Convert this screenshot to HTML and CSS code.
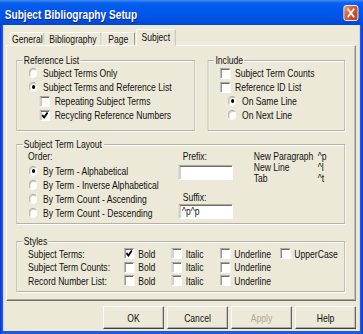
FILE: index.html
```html
<!DOCTYPE html>
<html lang="en">
<head>
    <meta charset="UTF-8">
    <title>Subject Bibliography Setup</title>
    <link rel="stylesheet" href="styles.css">
</head>
<body>

    <div class="screen">
    <div class="window">
        <div class="titlebar">
            <span class="title">Subject Bibliography Setup</span>
            <span class="close">
                <svg width="11" height="10" viewBox="0 0 11 10"><path d="M2 1.5 L9 8.5 M9 1.5 L2 8.5" stroke="#fff" stroke-width="2" stroke-linecap="square"/></svg>
            </span>
        </div>

        <div class="client">
            <div class="tabs">
                <div class="tab t-general">General</div>
                <div class="tab t-biblio">Bibliography</div>
                <div class="tab t-page">Page</div>
                <div class="tab active t-subject">Subject</div>
            </div>

            <div class="panel">
                <div class="top-row">
                    <fieldset class="group g-reflist">
                        <legend>Reference List</legend>
                        <div class="body">
                            <div class="opt"><span class="radio"></span>Subject Terms Only</div>
                            <div class="opt"><span class="radio on"></span>Subject Terms and Reference List</div>
                            <div class="opt sub"><span class="check"></span>Repeating Subject Terms</div>
                            <div class="opt sub"><span class="check"><svg width="9" height="9" viewBox="0 0 9 9"><path d="M1 4 L3.5 6.5 L8 1.5" stroke="#000" stroke-width="2" fill="none"/></svg></span>Recycling Reference Numbers</div>
                        </div>
                    </fieldset>
                    <fieldset class="group g-include">
                        <legend>Include</legend>
                        <div class="body">
                            <div class="opt"><span class="check"></span>Subject Term Counts</div>
                            <div class="opt"><span class="check"></span>Reference ID List</div>
                            <div class="opt sub"><span class="radio on"></span>On Same Line</div>
                            <div class="opt sub"><span class="radio"></span>On Next Line</div>
                        </div>
                    </fieldset>
                </div>

                <fieldset class="group g-layout">
                    <legend>Subject Term Layout</legend>
                    <div class="body layout">
                        <div class="order">
                            <div class="order-label">Order:</div>
                            <div class="opt"><span class="radio on"></span>By Term - Alphabetical</div>
                            <div class="opt"><span class="radio"></span>By Term - Inverse Alphabetical</div>
                            <div class="opt"><span class="radio"></span>By Term Count - Ascending</div>
                            <div class="opt"><span class="radio"></span>By Term Count - Descending</div>
                        </div>
                        <div class="fixes">
                            <div class="fix-label">Prefix:</div>
                            <div class="textbox"></div>
                            <div class="fix-label suffix">Suffix:</div>
                            <div class="textbox">^p^p</div>
                        </div>
                        <div class="codes">
                            <span>New Paragraph</span><span>^p</span>
                            <span>New Line</span><span>^l</span>
                            <span>Tab</span><span>^t</span>
                        </div>
                    </div>
                </fieldset>

                <fieldset class="group g-styles">
                    <legend>Styles</legend>
                    <div class="body styles">
                        <span>Subject Terms:</span>
                        <div class="opt"><span class="check"><svg width="9" height="9" viewBox="0 0 9 9"><path d="M1 4 L3.5 6.5 L8 1.5" stroke="#000" stroke-width="2" fill="none"/></svg></span>Bold</div>
                        <div class="opt"><span class="check"></span>Italic</div>
                        <div class="opt"><span class="check"></span>Underline</div>
                        <div class="opt"><span class="check"></span>UpperCase</div>

                        <span>Subject Term Counts:</span>
                        <div class="opt"><span class="check"></span>Bold</div>
                        <div class="opt"><span class="check"></span>Italic</div>
                        <div class="opt"><span class="check"></span>Underline</div>
                        <span></span>

                        <span>Record Number List:</span>
                        <div class="opt"><span class="check"></span>Bold</div>
                        <div class="opt"><span class="check"></span>Italic</div>
                        <div class="opt"><span class="check"></span>Underline</div>
                        <span></span>
                    </div>
                </fieldset>
            </div>

            <div class="buttons">
                <button>OK</button>
                <button>Cancel</button>
                <button class="disabled">Apply</button>
                <button>Help</button>
            </div>
        </div>
    </div>
    </div>

</body>
</html>
```

FILE: styles.css
```css
html, body {
    margin: 0;
    padding: 0;
    overflow: hidden;
}
body {
    font-family: "Liberation Sans", Arial, sans-serif;
    font-size: 11px;
    color: #111;
    background: #ECE9D8;
}
.screen {
    width: 363px;
    height: 334px;
    overflow: clip;
}
/* the dialog is laid out wide, then squeezed to the screenshot's width */
.window {
    width: 465px;
    height: 334px;
    transform: scaleX(0.78064);
    transform-origin: 0 0;
    background: linear-gradient(90deg, #0831D9, #1C5AE8 3px, #1C5AE8 calc(100% - 3px), #0831D9);
    display: flex;
    flex-direction: column;
}
.titlebar {
    height: 25px;
    display: flex;
    justify-content: space-between;
    align-items: center;
    padding: 0 6px 0 6px;
    background: linear-gradient(#3D8CF8 0, #0A5FEC 3px, #0058EE 9px, #0055E6 17px, #0048D2 25px);
    box-sizing: border-box;
}
.title {
    color: #fff;
    font-weight: bold;
    font-size: 13px;
    padding-top: 3px;
    text-shadow: 1px 1px 0 #0F1F8C;
}
.close {
    width: 17px;
    height: 14px;
    border: 1px solid #fff;
    border-radius: 3px;
    background: linear-gradient(135deg, #F29B7C, #E0552C 45%, #C7380E);
    display: flex;
    justify-content: center;
    align-items: center;
}
.client {
    flex: 1;
    margin: 0 4px 3px 4px;
    background: #ECE9D8;
    padding: 4px 5px 0 4px;
}
.tabs {
    display: flex;
    align-items: flex-start;
    height: 16px;
    padding-left: 5px;
}
.tab {
    height: 13px;
    margin-top: 3px;
    line-height: 12px;
    text-align: center;
    box-sizing: border-box;
    border-top: 1px solid #fff;
    border-left: 1px solid #fff;
    border-right: 1px solid #716F64;
    border-radius: 2px 2px 0 0;
}
.t-general { width: 44px; }
.t-biblio { width: 73px; }
.t-page { width: 43px; }
.tab.active {
    width: 51px;
    height: 17px;
    margin-top: 0;
    margin-left: 1px;
    line-height: 15px;
    background: #ECE9D8;
    position: relative;
    z-index: 1;
}
.panel {
    height: 256px;
    box-sizing: border-box;
    border: 1px solid;
    border-color: #fff #716F64 #716F64 #fff;
    box-shadow: inset -1px -1px 0 #ACA899;
}
.top-row {
    display: flex;
    gap: 16px;
    padding: 8px 0 0 11.5px;
}
.group {
    margin: 0;
    padding: 0;
    min-width: 0;
    border: 1px solid #B5B2A3;
    box-shadow: inset 1px 1px 0 #fff, 1px 1px 0 #fff;
    box-sizing: border-box;
}
.group legend {
    margin-left: 7px;
    padding: 0 2px;
    line-height: 12px;
    background: #ECE9D8;
}
.g-reflist { width: 229.5px; }
.g-include { width: 176px; }
.g-layout {
    width: 421.5px;
    margin: 7px 0 0 11.5px;
}
.g-styles {
    width: 421.5px;
    margin: 11px 0 0 11.5px;
}
.body {
    padding: 0 0 8px 15.5px;
}
.opt {
    display: flex;
    align-items: center;
    height: 14px;
    white-space: nowrap;
}
.g-reflist .sub { padding-left: 14px; }
.g-include .body { padding-left: 15px; }
.g-include .sub { padding-left: 10px; }
.radio {
    width: 11px;
    height: 10px;
    box-sizing: border-box;
    border-radius: 50%;
    border: 1px solid;
    border-color: #ACA899 #fff #fff #ACA899;
    background: #fff;
    box-shadow: inset 1px 1px 0 #D4D0C8;
    margin-right: 7px;
    display: flex;
    justify-content: center;
    align-items: center;
}
.radio.on::after {
    content: "";
    width: 4px;
    height: 4px;
    border-radius: 50%;
    background: #000;
}
.check {
    width: 13px;
    height: 11px;
    box-sizing: border-box;
    border: 1px solid;
    border-color: #ACA899 #fff #fff #ACA899;
    box-shadow: inset 1px 1px 0 #716F64;
    background: #fff;
    margin-right: 6px;
    display: flex;
    justify-content: center;
    align-items: center;
}
.layout {
    display: grid;
    grid-template-columns: 193px 96px auto;
    padding: 0 0 3px 14.5px;
}
.order-label {
    height: 12px;
    line-height: 12px;
    margin-bottom: 2px;
}
.order .opt { margin-left: 1px; }
.fix-label {
    height: 12px;
    line-height: 12px;
    margin-left: 5px;
}
.fix-label.suffix { margin-top: 11px; }
.textbox {
    width: 69px;
    height: 15px;
    box-sizing: border-box;
    margin-top: 3px;
    border: 1px solid;
    border-color: #ACA899 #fff #fff #ACA899;
    box-shadow: inset 1px 1px 0 #716F64;
    background: #fff;
    padding: 0 3px;
    line-height: 13px;
}
.suffix + .textbox { margin-top: 1px; }
.codes {
    display: grid;
    grid-template-columns: 82px auto;
    line-height: 11px;
    margin-top: 1px;
    align-content: start;
}
.styles {
    display: grid;
    grid-template-columns: 123px 61px 62px 77px auto;
    grid-auto-rows: 13.5px;
    align-items: center;
    padding: 0 0 3.5px 14.5px;
}
.styles .check { margin-right: 5px; }
.styles .opt { height: 13.5px; }
.buttons {
    display: flex;
    justify-content: flex-end;
    gap: 4px;
    margin-top: 5px;
}
button {
    width: 78px;
    height: 23px;
    font-family: inherit;
    font-size: 11px;
    color: #111;
    background: #ECE9D8;
    border: 1px solid;
    border-color: #fff #404040 #404040 #fff;
    box-shadow: inset -1px -1px 0 #ACA899;
    padding: 0;
}
button.disabled {
    color: #ACA899;
}
```
